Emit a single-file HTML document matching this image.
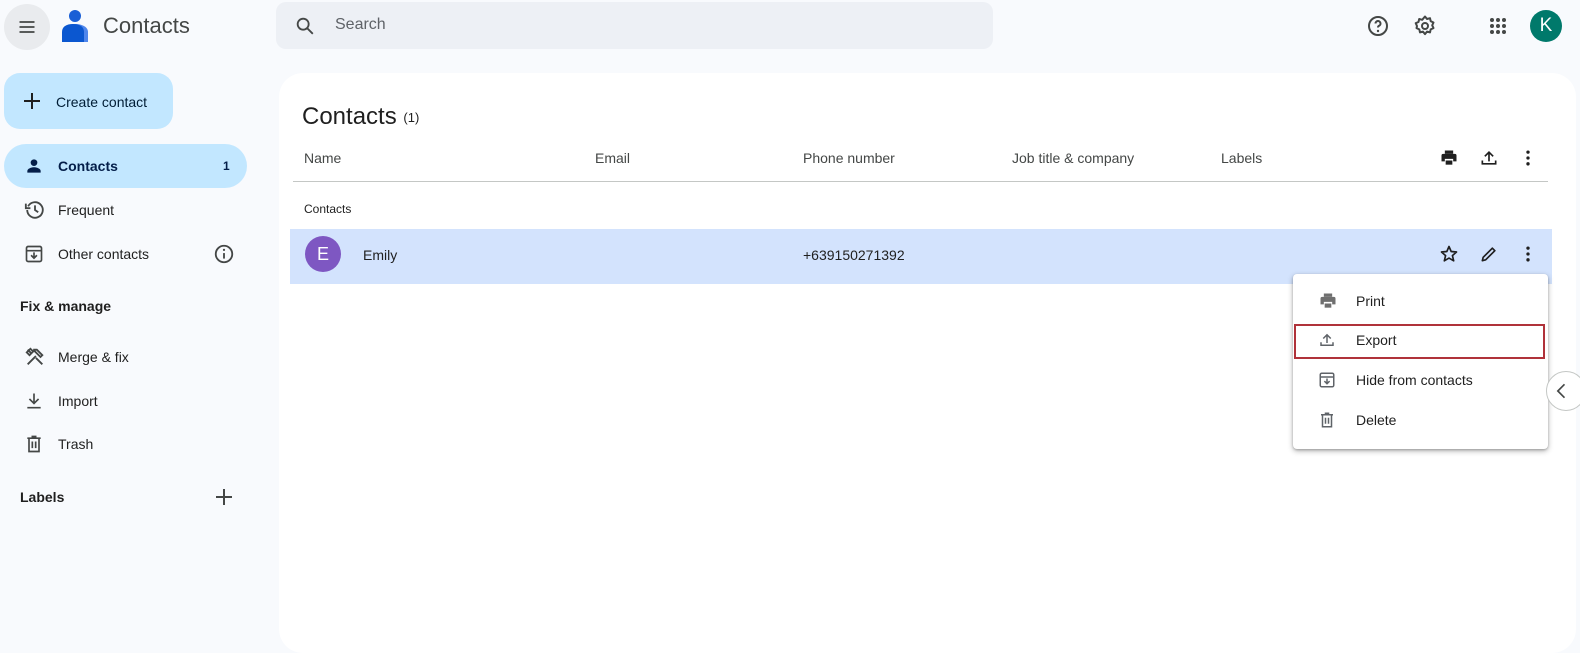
<!DOCTYPE html>
<html><head><style>
*{box-sizing:border-box;margin:0;padding:0}
body{width:1580px;height:642px;background:#f8fafd;font-family:"Liberation Sans",Arial,sans-serif;color:#1f1f1f;position:relative;overflow:hidden;font-size:14px}
.abs{position:absolute}
svg{display:block}
.nav{position:absolute;left:4px;width:243px;height:44px;border-radius:22px;display:flex;align-items:center;font-size:14px;color:#1f1f1f}
.nav svg{position:absolute;left:20px}
.nav span{position:absolute;left:54px}
.hdr{position:absolute;top:150px;font-size:14px;color:#444746}
.mi{position:absolute;left:1294px;width:254px;height:40px;display:flex;align-items:center;font-size:14px;color:#1f1f1f}
.mi svg{position:absolute;left:24px}
.mi span{position:absolute;left:62px}
</style></head><body>
<!-- top bar -->
<div class="abs" style="left:4px;top:4px;width:46px;height:46px;border-radius:50%;background:#e9ebee"></div>
<svg class="abs" style="left:17px;top:17px" width="20" height="20" viewBox="0 0 24 24"><path d="M3 6h18M3 12h18M3 18h18" stroke="#444746" stroke-width="2"/></svg>
<svg class="abs" style="left:60px;top:8px" width="32" height="36" viewBox="0 0 32 36"><circle cx="15" cy="8" r="6" fill="#1a5fd6"/><path d="M4 34v-10c0-5 4-8 11-8s13 3 13 8v10z" fill="#4f86ec"/><path d="M2 34v-10c0-5 4-8 11-8s11 3 11 8v10z" fill="#0b57d0"/></svg>
<div class="abs" style="left:103px;top:13px;font-size:22px;color:#444746">Contacts</div>
<div class="abs" style="left:276px;top:2px;width:717px;height:47px;border-radius:10px;background:#edf0f5"></div>
<svg class="abs" style="left:294px;top:15px" width="22" height="22" viewBox="0 0 24 24"><circle cx="10" cy="10" r="6" fill="none" stroke="#444746" stroke-width="2"/><path d="M14.5 14.5l6 6" stroke="#444746" stroke-width="2"/></svg>
<div class="abs" style="left:335px;top:16px;font-size:16px;color:#5f6368">Search</div>
<svg class="abs" style="left:1366px;top:14px" width="24" height="24" viewBox="0 0 24 24"><circle cx="12" cy="12" r="9" fill="none" stroke="#444746" stroke-width="2"/><path d="M9.5 9.5a2.5 2.5 0 1 1 3.5 2.3c-.7.4-1 .9-1 1.7" fill="none" stroke="#444746" stroke-width="2"/><circle cx="12" cy="17" r="1.2" fill="#444746"/></svg>
<svg class="abs" style="left:1413px;top:14px" width="24" height="24" viewBox="0 0 24 24"><circle cx="12" cy="12" r="3" fill="none" stroke="#444746" stroke-width="2"/><path d="M12 2.5l2 2.5 3-.8.7 3 2.8 1.3-1.3 2.8 1.3 2.8-2.8 1.3-.7 3-3-.8-2 2.5-2-2.5-3 .8-.7-3-2.8-1.3L4 12l-1.3-2.8L5.5 8l.7-3 3 .8z" fill="none" stroke="#444746" stroke-width="2" stroke-linejoin="round"/></svg>
<svg class="abs" style="left:1489px;top:17px" width="18" height="18" viewBox="0 0 18 18" fill="#444746"><circle cx="3" cy="3" r="2"/><circle cx="9" cy="3" r="2"/><circle cx="15" cy="3" r="2"/><circle cx="3" cy="9" r="2"/><circle cx="9" cy="9" r="2"/><circle cx="15" cy="9" r="2"/><circle cx="3" cy="15" r="2"/><circle cx="9" cy="15" r="2"/><circle cx="15" cy="15" r="2"/></svg>
<div class="abs" style="left:1530px;top:10px;width:32px;height:32px;border-radius:50%;background:#00796b;color:#fff;font-size:19px;text-align:center;line-height:32px">K</div>
<!-- sidebar -->
<div class="abs" style="left:4px;top:73px;width:169px;height:56px;border-radius:16px;background:#c2e7ff"></div>
<svg class="abs" style="left:22px;top:91px" width="20" height="20" viewBox="0 0 20 20"><path d="M10 2v16M2 10h16" stroke="#1f1f1f" stroke-width="2"/></svg>
<div class="abs" style="left:56px;top:94px;font-size:14px;color:#001d35">Create contact</div>
<div class="nav" style="top:144px;background:#c2e7ff;font-weight:bold;color:#041e49"><svg width="20" height="20" viewBox="0 0 24 24" fill="#041e49"><circle cx="12" cy="8" r="4"/><path d="M4 20v-2c0-3 5-4.5 8-4.5s8 1.5 8 4.5v2z"/></svg><span>Contacts</span><b style="position:absolute;left:219px;font-size:12px">1</b></div>
<div class="nav" style="top:188px"><svg width="22" height="22" viewBox="0 0 24 24"><path d="M4.5 8A8.5 8.5 0 1 1 3.5 12" fill="none" stroke="#444746" stroke-width="2"/><path d="M2 5v5h5" fill="none" stroke="#444746" stroke-width="2"/><path d="M12 7v5l3.5 2.5" fill="none" stroke="#444746" stroke-width="2"/></svg><span>Frequent</span></div>
<div class="nav" style="top:232px"><svg width="20" height="20" viewBox="0 0 24 24"><rect x="3" y="3" width="18" height="18" rx="2" fill="none" stroke="#444746" stroke-width="2"/><path d="M3 8h18M12 10v7M8.5 13.5L12 17l3.5-3.5" fill="none" stroke="#444746" stroke-width="2"/></svg><span>Other contacts</span><svg style="left:209px" width="22" height="22" viewBox="0 0 24 24"><circle cx="12" cy="12" r="9" fill="none" stroke="#444746" stroke-width="2"/><path d="M12 11v6" stroke="#444746" stroke-width="2"/><circle cx="12" cy="7.5" r="1.2" fill="#444746"/></svg></div>
<div class="abs" style="left:20px;top:298px;font-size:14px;font-weight:bold;color:#1f1f1f">Fix &amp; manage</div>
<div class="nav" style="top:335px"><svg width="22" height="22" viewBox="0 0 24 24"><path d="M4 20L13 11M11 4l3 0 6 6-2 2-7-7zM20 20l-7-7M4 4l4 4M3 7l4-4 3 3-4 4z" fill="none" stroke="#444746" stroke-width="2"/></svg><span>Merge &amp; fix</span></div>
<div class="nav" style="top:379px"><svg width="20" height="20" viewBox="0 0 24 24"><path d="M12 3v12M6.5 9.5L12 15l5.5-5.5M4 20h16" fill="none" stroke="#444746" stroke-width="2"/></svg><span>Import</span></div>
<div class="nav" style="top:422px"><svg width="20" height="20" viewBox="0 0 24 24"><path d="M4 5h16M9 3h6M6 5v16h12V5M10 9v8M14 9v8" fill="none" stroke="#444746" stroke-width="2"/></svg><span>Trash</span></div>
<div class="abs" style="left:20px;top:489px;font-size:14px;font-weight:bold">Labels</div>
<svg class="abs" style="left:214px;top:487px" width="20" height="20" viewBox="0 0 20 20"><path d="M10 2v16M2 10h16" stroke="#444746" stroke-width="2"/></svg>
<!-- main card -->
<div class="abs" style="left:279px;top:73px;width:1297px;height:580px;border-radius:24px;background:#fff"></div>
<div class="abs" style="left:302px;top:103px;font-size:24px;color:#1f1f1f">Contacts <span style="font-size:13px;vertical-align:middle">(1)</span></div>
<div class="hdr" style="left:304px">Name</div>
<div class="hdr" style="left:595px">Email</div>
<div class="hdr" style="left:803px">Phone number</div>
<div class="hdr" style="left:1012px">Job title &amp; company</div>
<div class="hdr" style="left:1221px">Labels</div>
<svg class="abs" style="left:1439px;top:148px" width="20" height="20" viewBox="0 0 24 24" fill="#1f1f1f"><path d="M7 3h10v4H7z"/><path d="M3 9a2 2 0 0 1 2-2h14a2 2 0 0 1 2 2v7h-4v-3H7v3H3z"/><path d="M8 15h8v5H8z"/></svg>
<svg class="abs" style="left:1479px;top:148px" width="20" height="20" viewBox="0 0 24 24"><path d="M12 16V5M7 10l5-5 5 5M4 15v4h16v-4" fill="none" stroke="#1f1f1f" stroke-width="2"/></svg>
<svg class="abs" style="left:1518px;top:148px" width="20" height="20" viewBox="0 0 24 24" fill="#1f1f1f"><circle cx="12" cy="5" r="2"/><circle cx="12" cy="12" r="2"/><circle cx="12" cy="19" r="2"/></svg>
<div class="abs" style="left:293px;top:181px;width:1255px;height:1px;background:#c4c7c5"></div>
<div class="abs" style="left:304px;top:202px;font-size:12px;color:#1f1f1f">Contacts</div>
<div class="abs" style="left:290px;top:229px;width:1262px;height:55px;background:#d3e3fd"></div>
<div class="abs" style="left:305px;top:236px;width:36px;height:36px;border-radius:50%;background:#7e57c2;color:#fff;font-size:18px;text-align:center;line-height:36px">E</div>
<div class="abs" style="left:363px;top:247px">Emily</div>
<div class="abs" style="left:803px;top:247px">+639150271392</div>
<svg class="abs" style="left:1439px;top:244px" width="20" height="20" viewBox="0 0 24 24"><path d="M12 3l2.6 6 6.4.6-4.9 4.3 1.5 6.3L12 16.9l-5.6 3.3 1.5-6.3L3 9.6 9.4 9z" fill="none" stroke="#1f1f1f" stroke-width="2" stroke-linejoin="round"/></svg>
<svg class="abs" style="left:1479px;top:244px" width="20" height="20" viewBox="0 0 24 24"><path d="M4 20l1-4L16 5l3 3L8 19z" fill="none" stroke="#1f1f1f" stroke-width="2" stroke-linejoin="round"/></svg>
<svg class="abs" style="left:1518px;top:244px" width="20" height="20" viewBox="0 0 24 24" fill="#1f1f1f"><circle cx="12" cy="5" r="2"/><circle cx="12" cy="12" r="2"/><circle cx="12" cy="19" r="2"/></svg>
<!-- menu -->
<div class="abs" style="left:1293px;top:274px;width:255px;height:175px;background:#fff;border-radius:4px;box-shadow:0 2px 6px rgba(0,0,0,.3),0 1px 2px rgba(0,0,0,.2)"></div>
<div class="mi" style="top:281px"><svg width="20" height="20" viewBox="0 0 24 24" fill="#6f6f6f"><path d="M7 3h10v4H7z"/><path d="M3 9a2 2 0 0 1 2-2h14a2 2 0 0 1 2 2v7h-4v-3H7v3H3z"/><path d="M8 15h8v5H8z"/></svg><span>Print</span></div>
<div class="abs" style="left:1294px;top:324px;width:251px;height:35px;border:2px solid #b0323a"></div>
<div class="mi" style="top:320px"><svg width="18" height="18" viewBox="0 0 24 24"><path d="M12 16V5M7 10l5-5 5 5M4 15v4h16v-4" fill="none" stroke="#5f6368" stroke-width="2"/></svg><span>Export</span></div>
<div class="mi" style="top:360px"><svg width="18" height="18" viewBox="0 0 24 24"><rect x="3" y="3" width="18" height="18" rx="2" fill="none" stroke="#5f6368" stroke-width="2"/><path d="M3 8h18M12 10v7M8.5 13.5L12 17l3.5-3.5" fill="none" stroke="#5f6368" stroke-width="2"/></svg><span>Hide from contacts</span></div>
<div class="mi" style="top:400px"><svg width="18" height="18" viewBox="0 0 24 24"><path d="M4 5h16M9 3h6M6 5v16h12V5M10 9v8M14 9v8" fill="none" stroke="#5f6368" stroke-width="2"/></svg><span>Delete</span></div>
<div class="abs" style="left:1546px;top:371px;width:40px;height:40px;border-radius:50%;background:#fff;border:1px solid #c4c7c5"></div>
<svg class="abs" style="left:1552px;top:381px" width="20" height="20" viewBox="0 0 24 24"><path d="M15 4l-8 8 8 8" fill="none" stroke="#444746" stroke-width="2"/></svg>
</body></html>
